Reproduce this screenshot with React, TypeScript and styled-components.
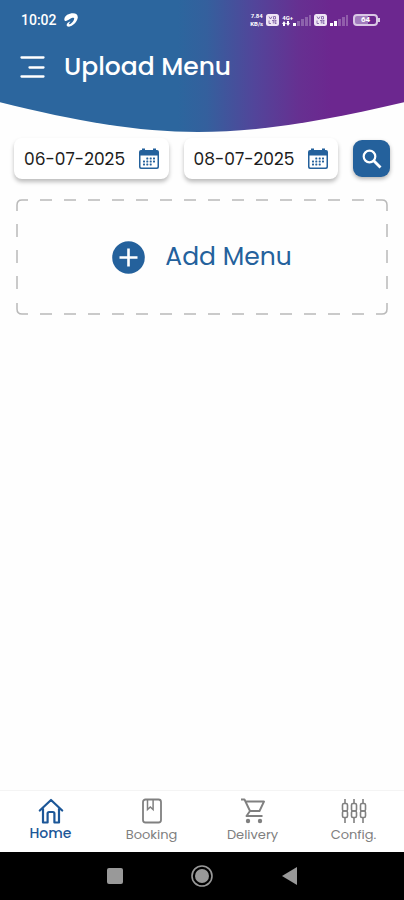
import React from "react";
import styled, { createGlobalStyle } from "styled-components";

const BLUE = "#24619c";
const GREY = "#808080";

const GlobalStyle = createGlobalStyle`
  * { box-sizing: border-box; }
  body { margin: 0; background: #fefefe; font-family: Poppins, Inter, "Noto Sans", sans-serif; }
  button, input { font: inherit; color: inherit; border: 0; background: none; padding: 0; margin: 0; }
  svg { display: block; flex: none; }
`;

const Screen = styled.div`
  min-height: 100vh;
  display: flex;
  flex-direction: column;
`;

const ClipDefs = styled.svg`
  position: absolute;
`;

const Header = styled.header`
  height: 132px;
  color: #fff;
  background: linear-gradient(90deg, #2c669e 0%, #2c669e 44%, #34609d 51%, #52459a 63%, #663091 74%, #6c278f 82%);
  clip-path: url(#header-curve);
`;

const StatusBar = styled.div`
  display: flex;
  align-items: center;
  gap: 7px;
  height: 40px;
  padding: 0 21px;
`;

const Clock = styled.span`
  font: 500 14px/16px Roboto, sans-serif;
`;

const Signals = styled.div`
  display: flex;
  align-items: center;
  gap: 3px;
  margin-left: auto;
`;

const NetSpeed = styled.span`
  display: flex;
  flex-direction: column;
  align-items: center;
  font: 700 6px/8px Roboto, sans-serif;
`;

const TitleRow = styled.div`
  display: flex;
  align-items: center;
  gap: 19px;
  height: 54px;
  padding: 0 20px;
`;

const IconButton = styled.button`
  display: flex;
  cursor: pointer;
`;

const Title = styled.h1`
  margin: 0;
  font-size: 25px;
  line-height: 32px;
  font-weight: 500;
`;

const Content = styled.main`
  flex: 1;
  padding: 6px 14px 16px;
`;

const Filters = styled.form`
  display: flex;
  align-items: center;
  gap: 15px;
`;

const DateField = styled.label`
  display: flex;
  align-items: center;
  flex: 1;
  min-width: 0;
  height: 41px;
  padding: 0 10px;
  border-radius: 8px;
  background: #fff;
  box-shadow: 0 3px 4px rgba(0, 0, 0, 0.26);
`;

const DateInput = styled.input`
  flex: 1;
  width: 0;
  min-width: 0;
  color: #1c1c1c;
  font-size: 17px;
  line-height: 24px;
  outline: 0;
`;

const SearchButton = styled.button`
  display: flex;
  align-items: center;
  justify-content: center;
  width: 37px;
  height: 37px;
  border-radius: 9px;
  color: #fff;
  background: ${BLUE};
  box-shadow: 0 2px 4px rgba(0, 0, 0, 0.3);
  cursor: pointer;
`;

const AddButton = styled.button`
  position: relative;
  display: flex;
  align-items: center;
  justify-content: center;
  gap: 20px;
  width: calc(100% - 4px);
  height: 116px;
  margin: 20px 2px 0;
  color: ${BLUE};
  font-size: 25px;
  line-height: 32px;
  cursor: pointer;
`;

const DashedFrame = styled.svg`
  position: absolute;
  inset: 0;
  width: 100%;
  height: 100%;
  overflow: visible;
`;

const TabBar = styled.nav`
  display: grid;
  grid-template-columns: repeat(4, 1fr);
  height: 62px;
  border-top: 1px solid #f4f4f4;
  background: #fff;
`;

const Tab = styled.a<{ $active?: boolean }>`
  display: flex;
  flex-direction: column;
  align-items: center;
  gap: ${(p) => (p.$active ? 0 : 2)}px;
  padding-top: 6px;
  color: ${(p) => (p.$active ? "#1c5798" : GREY)};
  font-size: ${(p) => (p.$active ? 14 : 13)}px;
  line-height: 16px;
  font-weight: ${(p) => (p.$active ? 500 : 400)};
  text-decoration: none;
`;

const SystemBar = styled.div`
  display: flex;
  align-items: center;
  justify-content: center;
  gap: 64px;
  height: 48px;
  background: #000;
  color: #999;
`;

const CarrierIcon = () => (
  <svg width="14" height="14" viewBox="0 0 14 14" fill="#fff">
    <path fillRule="evenodd" d="M.3 6.500C.5 2.500 5 .3 9 .3c3.500 0 5.200 2 4.700 4.800C13 9 8.500 13.600 5 13.700c-2.500 0-2.800-1.700-1.800-3.200.8-1.200 2-1.800 3.300-2.100-1.300 1.400-2 2.500-1.300 2.800 1.300.5 4.800-3.200 5-5.400.1-1.700-2.200-1.300-4.400.2C3.500 7.500.8 9.300.3 6.500z" />
  </svg>
);

const VolteIcon = () => (
  <svg width="13" height="12" viewBox="0 0 13 12">
    <rect width="13" height="12" rx="2.500" fill="#eee5f5" />
    <path d="M3 2.500 4.500 5 6 2.500M7.500 2.500h2V5h-2zM3 6.500v3h2M6 6.500h2.500M7.300 6.500v3M10.500 6.500H9v3h1.500M9 8h1.500" fill="none" stroke="#76569f" strokeWidth=".8" />
  </svg>
);

const BarsIcon = ({ strong }: { strong: number }) => (
  <svg width="18" height="12" viewBox="0 0 18 12" fill="#fff">
    {[0, 1, 2, 3, 4].map((i) => (
      <rect key={i} x={i * 4} y={9 - i * 2} width="3" height={3 + i * 2} opacity={i < strong ? 1 : 0.25} />
    ))}
  </svg>
);

const NetworkStack = styled.span`
  display: flex;
  align-items: flex-end;
`;

const NetworkType = styled.span`
  display: flex;
  flex-direction: column;
  font: 700 6px/7px Roboto, sans-serif;
`;

const Battery = styled.span`
  position: relative;
  width: 25px;
  height: 12px;
  margin: 0 5px 0 2px;
  border: 2px solid #d9c8e5;
  border-radius: 4px;
  background: linear-gradient(90deg, #a17bbd 64%, #6c278f 64%);
  font: 700 8px/8px Roboto, sans-serif;
  text-align: center;
  &::after {
    content: "";
    position: absolute;
    left: 23px;
    top: 2px;
    width: 2px;
    height: 4px;
    background: #d9c8e5;
  }
`;

const DataArrows = () => (
  <svg width="10" height="5" viewBox="0 0 10 5" fill="#fff">
    <path d="M0 3 2 0l2 3H3v2H1V3zM4 2h1V0h2v2h1L6 5z" />
  </svg>
);

const MenuIcon = () => (
  <svg width="25" height="24" viewBox="0 0 25 24" fill="none" stroke="#fff" strokeWidth="2.300" strokeLinecap="round">
    <path d="M1.500 2.500h22M9.500 12.500h14M1.500 21.500h22" />
  </svg>
);

const CalendarIcon = () => (
  <svg width="20" height="22" viewBox="0 0 20 22" fill={BLUE}>
    <path fillRule="evenodd" d="M2 2h1V.5h3V2h8V.5h3V2h1a2 2 0 0 1 2 2v15a2 2 0 0 1-2 2H2a2 2 0 0 1-2-2V4a2 2 0 0 1 2-2zM1.500 7.500V18.500q0 1 1 1h15q1 0 1-1V7.500z" />
    {[10, 13, 16].map((y, r) =>
      [4, 7.3, 10.700, 14].map((x, c) =>
        (r === 0 && c === 0) || (r === 2 && c === 3) ? null : <rect key={`${x}-${y}`} x={x} y={y - 0.500} width="2" height="2" rx=".4" />
      )
    )}
  </svg>
);

const SearchIcon = () => (
  <svg width="20" height="20" viewBox="0 0 20 20" fill="none" stroke="currentColor">
    <circle cx="7.500" cy="7.500" r="5.800" strokeWidth="2.200" />
    <path d="m11.500 11.500 7 7" strokeWidth="2.800" />
  </svg>
);

const PlusIcon = () => (
  <svg width="33" height="33" viewBox="0 0 33 33">
    <circle cx="16.500" cy="16.500" r="16.300" fill={BLUE} />
    <path d="M16.500 7.500v18M7.500 16.500h18" stroke="#fff" strokeWidth="2.600" />
  </svg>
);

const HomeIcon = () => (
  <svg width="26" height="28" viewBox="0 0 26 28" fill="none" stroke="currentColor" strokeWidth="2.200">
    <path d="M1.800 13.500 13 3l11.200 10.500M5 11.500v14h4.600V16.500q0-1.500 1.500-1.500h3.800q1.500 0 1.500 1.500v9H21v-14" strokeLinejoin="round" strokeLinecap="round" />
  </svg>
);

const BookIcon = () => (
  <svg width="22" height="28" viewBox="0 0 22 28" fill="none" stroke="currentColor" strokeWidth="1.800">
    <rect x="2" y="2.500" width="18" height="23" rx="2.500" />
    <path d="M6.500 3v9.500L9.300 10l2.800 2.500V3" strokeWidth="1.500" />
  </svg>
);

const CartIcon = () => (
  <svg width="26" height="28" viewBox="0 0 26 28" fill="none" stroke="currentColor" strokeWidth="1.900">
    <path d="M1 2.500h3.500L10 14h9.500l4.500-9.500H5.500M10 14l-3.500 5H22.500" strokeLinejoin="round" />
    <circle cx="8" cy="24" r="2.200" fill="currentColor" stroke="none" />
    <circle cx="20" cy="24" r="2.200" fill="currentColor" stroke="none" />
  </svg>
);

const SkewerIcon = () => (
  <svg width="26" height="28" viewBox="0 0 26 28" fill="none" stroke="currentColor" strokeWidth="1.600">
    {[4, 13, 22].map((x) => (
      <g key={x}>
        <path d={`M${x} 2v4M${x} 21v5`} />
        <rect x={x - 2.500} y="6.500" width="5" height="7.500" rx="1.500" />
        <rect x={x - 2.500} y="14" width="5" height="6.500" rx="1.500" />
      </g>
    ))}
  </svg>
);

const tabs = [
  { label: "Home", Icon: HomeIcon, active: true },
  { label: "Booking", Icon: BookIcon },
  { label: "Delivery", Icon: CartIcon },
  { label: "Config.", Icon: SkewerIcon },
];

const Frame = () => (
  <DashedFrame fill="none" stroke="#b9b9b9" strokeWidth="1.500" aria-hidden="true">
    <line x1="24" y1="1" x2="96%" y2="1" strokeDasharray="12 12" />
    <svg y="100%" overflow="visible">
      <line x1="24" y1="-1" x2="96%" y2="-1" strokeDasharray="12 12" />
      <path d="M12 -1H6Q1 -1 1 -6v-6" />
    </svg>
    <line x1="1" y1="25" x2="1" y2="80%" strokeDasharray="13 13" />
    <path d="M12 1H6Q1 1 1 6v6" />
    <svg x="100%" overflow="visible">
      <line x1="-1" y1="25" x2="-1" y2="80%" strokeDasharray="13 13" />
      <path d="M-12 1h6q5 0 5 5v6" />
    </svg>
    <svg x="100%" y="100%" overflow="visible">
      <path d="M-12 -1h6q5 0 5 -5v-6" />
    </svg>
  </DashedFrame>
);

export default function App() {
  return (
    <Screen>
      <GlobalStyle />
      <ClipDefs width="0" height="0" aria-hidden="true">
        <clipPath id="header-curve" clipPathUnits="objectBoundingBox">
          <path d="M0 0H1V.775C.8 .92 .64 1 .49 1S.19 .92 0 .775Z" />
        </clipPath>
      </ClipDefs>
      <Header>
        <StatusBar>
          <Clock>10:02</Clock>
          <CarrierIcon />
          <Signals>
            <NetSpeed>
              <span>7.84</span>
              <span>KB/s</span>
            </NetSpeed>
            <VolteIcon />
            <NetworkStack>
              <NetworkType>4G+<DataArrows /></NetworkType>
              <BarsIcon strong={1} />
            </NetworkStack>
            <VolteIcon />
            <BarsIcon strong={2} />
            <Battery>64</Battery>
          </Signals>
        </StatusBar>
        <TitleRow>
          <IconButton type="button" aria-label="Open navigation"><MenuIcon /></IconButton>
          <Title>Upload Menu</Title>
        </TitleRow>
      </Header>
      <Content>
        <Filters onSubmit={(e) => e.preventDefault()}>
          <DateField>
            <DateInput aria-label="From date" defaultValue="06-07-2025" />
            <CalendarIcon />
          </DateField>
          <DateField>
            <DateInput aria-label="To date" defaultValue="08-07-2025" />
            <CalendarIcon />
          </DateField>
          <SearchButton type="submit" aria-label="Search"><SearchIcon /></SearchButton>
        </Filters>
        <AddButton type="button">
          <Frame />
          <PlusIcon />
          Add Menu
        </AddButton>
      </Content>
      <TabBar>
        {tabs.map(({ label, Icon, active }) => (
          <Tab key={label} href={`#${label}`} $active={active}>
            <Icon />
            {label}
          </Tab>
        ))}
      </TabBar>
      <SystemBar>
        <IconButton type="button" aria-label="Recent apps">
          <svg width="24" height="24" viewBox="0 0 24 24" fill="currentColor"><rect x="5" y="4" width="16" height="16" rx="2" /></svg>
        </IconButton>
        <IconButton type="button" aria-label="Home screen">
          <svg width="24" height="24" viewBox="0 0 24 24" fill="currentColor"><circle cx="12" cy="12" r="7" /><circle cx="12" cy="12" r="10" fill="none" stroke="currentColor" strokeWidth="1.600" /></svg>
        </IconButton>
        <IconButton type="button" aria-label="Back">
          <svg width="24" height="24" viewBox="0 0 24 24" fill="currentColor"><path d="M4 12 19 3v18z" /></svg>
        </IconButton>
      </SystemBar>
    </Screen>
  );
}
